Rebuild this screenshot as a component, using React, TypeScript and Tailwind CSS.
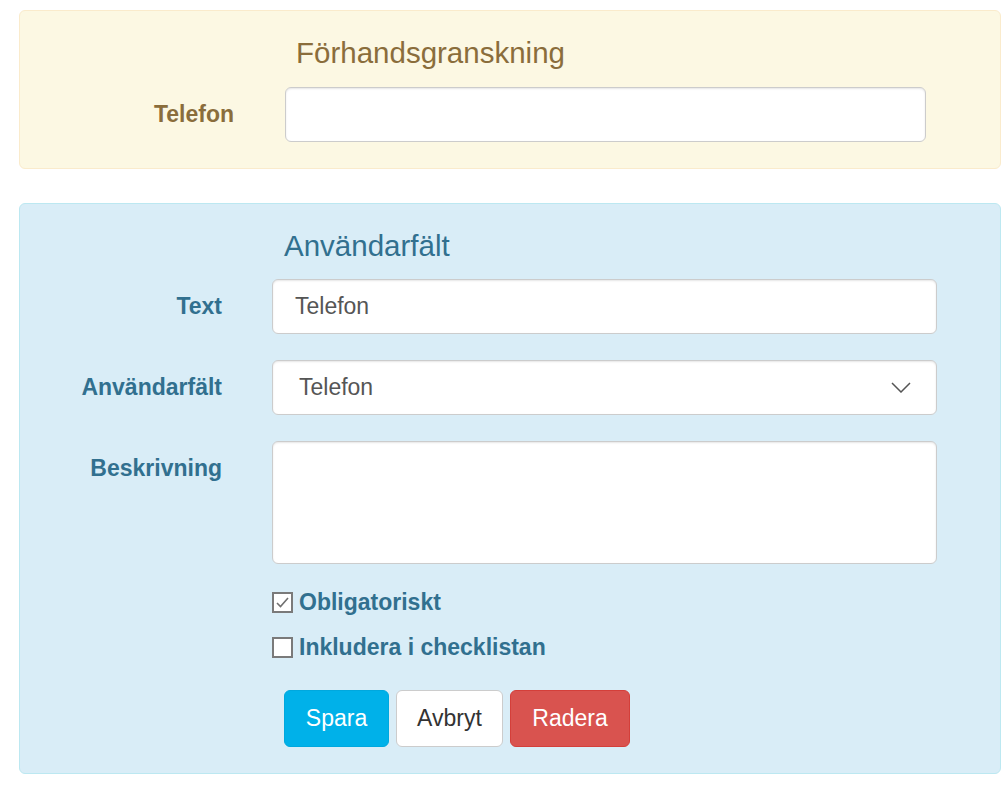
import React from "react";

const font = { fontFamily: '"Liberation Sans", Arial, sans-serif' };

function Box({ checked }: { checked?: boolean }) {
  return (
    <span className="flex h-[21px] w-[21px] shrink-0 items-center justify-center border-2 border-[#7a7a7a] bg-white">
      {checked && (
        <svg width="15" height="13" viewBox="0 0 15 13">
          <polyline points="2,7 5.5,10.5 13,2" fill="none" stroke="#707070" strokeWidth="1.6" />
        </svg>
      )}
    </span>
  );
}

export default function App() {
  return (
    <div className="min-h-[785px] w-[1004px] bg-white pt-[10px]" style={font}>
      {/* Preview panel */}
      <div className="ml-[19px] w-[982px] rounded-[6px] border border-[#faebcc] bg-[#fcf8e3] pt-[25px] pb-[26px]">
        <div className="ml-[276px] text-[29.5px] leading-[33px] text-[#8a6d3b]">Förhandsgranskning</div>
        <div className="mt-[18px] flex items-center">
          <div className="w-[214px] text-right text-[23px] font-bold leading-[33px] text-[#8a6d3b]">Telefon</div>
          <div className="ml-[51px] h-[55px] w-[641px] rounded-[6px] border border-[#cccccc] bg-white shadow-[inset_0_1px_2px_rgba(0,0,0,0.1)]" />
        </div>
      </div>

      {/* Info panel */}
      <div className="mt-[34px] ml-[19px] w-[982px] rounded-[6px] border border-[#bce8f1] bg-[#d9edf7] pt-[25px] pb-[26px]">
        <div className="ml-[264px] text-[29.5px] leading-[33px] text-[#31708f]">Användarfält</div>

        <div className="mt-[17px] flex items-center">
          <div className="w-[202px] text-right text-[23px] font-bold leading-[33px] text-[#31708f]">Text</div>
          <div className="ml-[50px] flex h-[55px] w-[665px] items-center rounded-[6px] border border-[#cccccc] bg-white pl-[22px] text-[23px] text-[#555555] shadow-[inset_0_1px_2px_rgba(0,0,0,0.1)]">
            Telefon
          </div>
        </div>

        <div className="mt-[26px] flex items-center">
          <div className="w-[202px] text-right text-[23px] font-bold leading-[33px] text-[#31708f]">Användarfält</div>
          <div className="ml-[50px] flex h-[55px] w-[665px] items-center justify-between rounded-[6px] border border-[#cccccc] bg-white pr-[25px] pl-[26px] text-[23px] text-[#555555] shadow-[inset_0_1px_2px_rgba(0,0,0,0.1)]">
            <span>Telefon</span>
            <svg width="20" height="11" viewBox="0 0 20 11">
              <polyline points="1,1 10,10 19,1" fill="none" stroke="#555555" strokeWidth="1.5" />
            </svg>
          </div>
        </div>

        <div className="mt-[26px] flex items-start">
          <div className="w-[202px] pt-[11px] text-right text-[23px] font-bold leading-[33px] text-[#31708f]">Beskrivning</div>
          <div className="ml-[50px] h-[123px] w-[665px] rounded-[6px] border border-[#cccccc] bg-white shadow-[inset_0_1px_2px_rgba(0,0,0,0.1)]" />
        </div>

        <div className="ml-[252px] mt-[22px] flex flex-col gap-[12px]">
          <div className="flex items-center gap-[6px] text-[23px] font-bold leading-[33px] text-[#31708f]">
            <Box checked />
            <span>Obligatoriskt</span>
          </div>
          <div className="flex items-center gap-[6px] text-[23px] font-bold leading-[33px] text-[#31708f]">
            <Box />
            <span>Inkludera i checklistan</span>
          </div>
        </div>

        <div className="ml-[264px] mt-[26px] flex gap-[7px] text-[23px]">
          <div className="flex h-[57px] w-[105px] items-center justify-center rounded-[6px] border border-[#00a8de] bg-[#00b1e9] text-white">Spara</div>
          <div className="flex h-[57px] w-[107px] items-center justify-center rounded-[6px] border border-[#cccccc] bg-white text-[#333333]">Avbryt</div>
          <div className="flex h-[57px] w-[120px] items-center justify-center rounded-[6px] border border-[#d43f3a] bg-[#d9534f] text-white">Radera</div>
        </div>
      </div>
    </div>
  );
}
